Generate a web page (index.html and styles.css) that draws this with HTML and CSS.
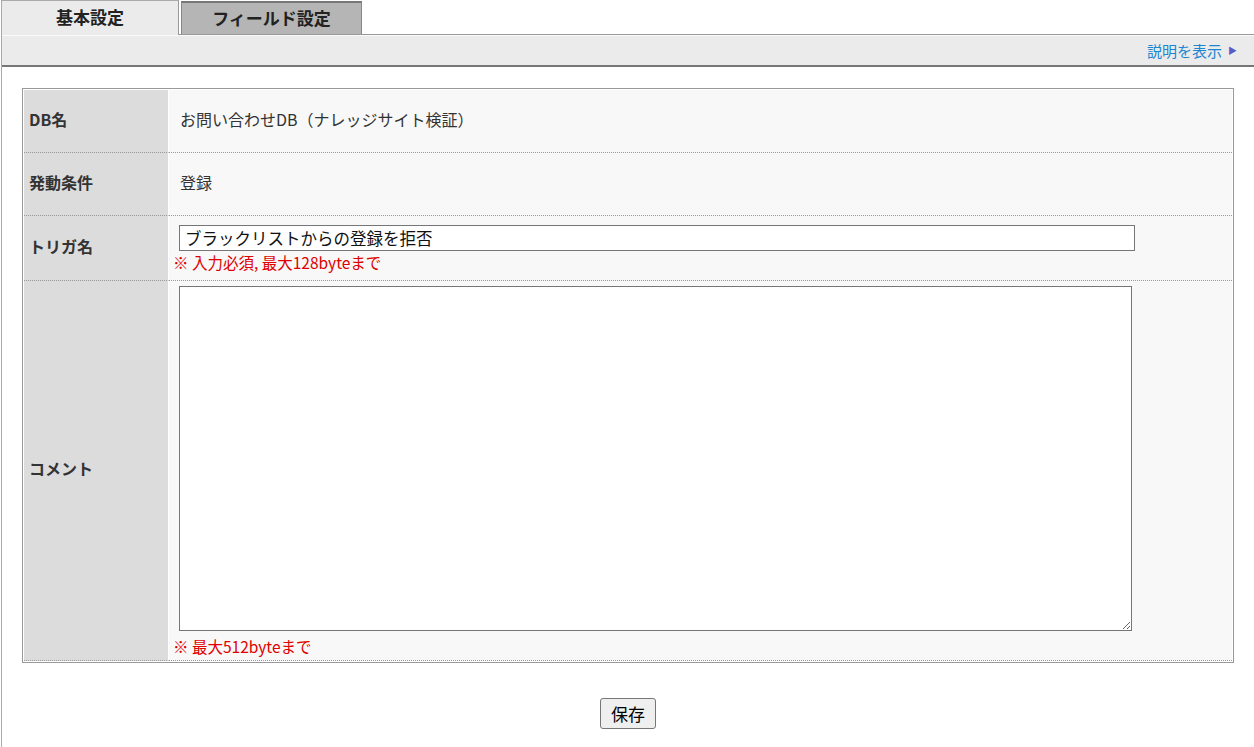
FILE: index.html
```html
<!DOCTYPE html>
<html lang="ja">
<head>
    <meta charset="UTF-8">
    <title>トリガ設定 - 基本設定</title>
    <link rel="stylesheet" href="styles.css">
</head>
<body>
    <div class="page">
        <div class="tabs">
            <a href="#" class="tab active">基本設定</a>
            <a href="#" class="tab">フィールド設定</a>
        </div>
        <div class="tab-bar">
            <a href="#" class="help-link">説明を表示<span class="arrow">&#9654;</span></a>
        </div>

        <div class="content">
            <table class="form-table">
                <tr>
                    <th>DB名</th>
                    <td>お問い合わせDB（ナレッジサイト検証）</td>
                </tr>
                <tr>
                    <th>発動条件</th>
                    <td>登録</td>
                </tr>
                <tr>
                    <th>トリガ名</th>
                    <td class="field">
                        <input type="text" class="text-input" value="ブラックリストからの登録を拒否">
                        <div class="note">※ 入力必須, 最大128byteまで</div>
                    </td>
                </tr>
                <tr>
                    <th>コメント</th>
                    <td class="field field-area">
                        <textarea class="comment"></textarea>
                        <div class="note">※ 最大512byteまで</div>
                    </td>
                </tr>
            </table>

            <div class="buttons">
                <button class="save-btn">保存</button>
            </div>
        </div>
    </div>
</body>
</html>
```

FILE: styles.css
```css
body {
    font-family: "Noto Sans CJK JP", "DejaVu Sans", sans-serif;
    margin: 0;
    padding: 0 0 0 1px;
    background-color: #fff;
    color: #333;
}
.page {
    border-left: 1px solid #aaa;
    min-height: 747px;
}
.tabs {
    display: flex;
    align-items: flex-end;
    height: 34px;
}
.tab {
    display: flex;
    align-items: center;
    justify-content: center;
    font-size: 17px;
    font-weight: bold;
    color: #222;
    text-decoration: none;
    box-sizing: border-box;
}
.tab.active {
    width: 177px;
    height: 35px;
    margin-bottom: -1px;
    background-color: #ebebeb;
    border-top: 1px solid #aaa;
    border-right: 1px solid #999;
    position: relative;
    z-index: 1;
    padding-bottom: 4px;
}
.tab:not(.active) {
    width: 181px;
    height: 33px;
    margin-left: 2px;
    background-color: #b5b5b5;
    border: 1px solid #888;
    border-top: 2px solid #777;
    border-bottom: none;
    padding-bottom: 2px;
}
.tab-bar {
    height: 30px;
    background-color: #ebebeb;
    border-top: 1px solid #999;
    border-bottom: 2px solid #777;
    box-shadow: inset 0 1px 0 #fafafa;
    display: flex;
    justify-content: flex-end;
    align-items: center;
    padding-right: 17px;
}
.help-link {
    color: #1c86d0;
    font-size: 15px;
    text-decoration: none;
    display: flex;
    align-items: center;
}
.help-link .arrow {
    color: #5b5bc8;
    font-size: 9px;
    margin-left: 6px;
}
.content {
    padding: 21px 20px 0 20px;
}
.form-table {
    width: 100%;
    border-collapse: separate;
    border-spacing: 0;
    border: 1px solid #999;
    padding: 1px;
    font-size: 16px;
    line-height: 1.2;
}
.form-table th,
.form-table td {
    height: 63px;
    border-bottom: 1px dotted #999;
    vertical-align: middle;
    box-sizing: border-box;
}
.form-table th {
    width: 145px;
    background-color: #dcdcdc;
    border-right: 1px solid #fff;
    text-align: left;
    padding: 0 0 3px 5px;
    font-size: 16px;
    font-weight: bold;
    color: #333;
}
.form-table td {
    background-color: #f8f8f8;
    padding: 0 0 3px 11px;
    color: #333;
}
.form-table td.field {
    padding: 9px 0 8px 10px;
}
.form-table td.field-area {
    padding: 5px 0 3px 10px;
}
.text-input {
    display: block;
    width: 956px;
    height: 26px;
    box-sizing: border-box;
    border: 1px solid #767676;
    padding: 0 5px;
    font-family: "Noto Sans CJK JP", sans-serif;
    font-size: 16.5px;
    color: #111;
    background: #fff;
}
.comment {
    display: block;
    width: 953px;
    height: 345px;
    box-sizing: border-box;
    border: 1px solid #767676;
    margin: 0;
    background: #fff;
    font-family: "Noto Sans CJK JP", sans-serif;
}
.note {
    color: #e00000;
    font-size: 15.5px;
    line-height: 20px;
    margin-top: 1px;
    margin-left: -6px;
}
.field-area .note {
    margin-top: 4px;
    line-height: 22px;
}
.buttons {
    text-align: center;
    margin-top: 35px;
}
.save-btn {
    width: 56px;
    height: 31px;
    font-family: "Noto Sans CJK JP", sans-serif;
    font-size: 17px;
    color: #000;
    background-color: #efefef;
    border: 1px solid #767676;
    border-radius: 3px;
    padding: 0;
}
```
